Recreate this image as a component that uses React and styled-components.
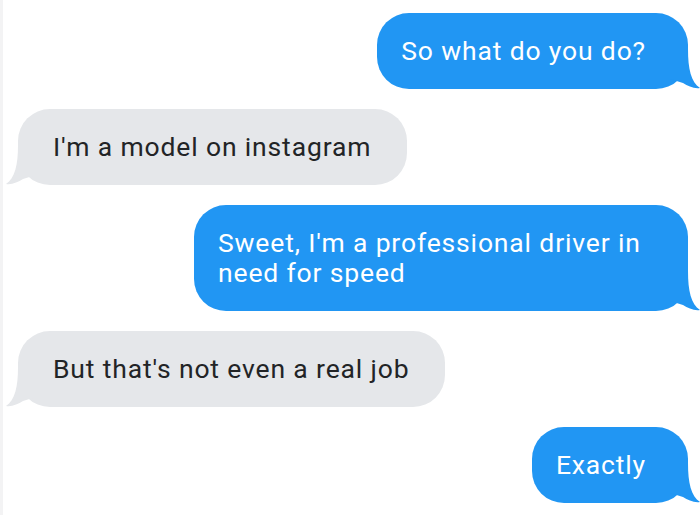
import React from 'react';
import styled, { createGlobalStyle } from 'styled-components';

const GlobalStyle = createGlobalStyle`
	html, body {
		margin: 0;
		padding: 0;
		background: #ffffff;
	}
	body {
		font-family: Roboto, 'Noto Sans', 'Liberation Sans', sans-serif;
	}
`;

const Screen = styled.div`
	width: 700px;
	height: 515px;
	box-sizing: border-box;
	border-left: 3px solid #f3f3f4;
	padding-top: 13px;
	display: flex;
	flex-direction: column;
	gap: 20px;
	overflow: hidden;
`;

const Row = styled.div`
	display: flex;
	justify-content: ${(p) => (p.$mine ? 'flex-end' : 'flex-start')};
	padding: ${(p) => (p.$mine ? '0 12px 0 0' : '0 0 0 15px')};
`;

const Bubble = styled.div`
	position: relative;
	max-width: 428px;
	padding: ${(p) => (p.$mine ? '23px 42px 23px 24px' : '23px 36px 23px 35px')};
	border-radius: 32px;
	background: ${(p) => (p.$mine ? '#2196f3' : '#e5e7ea')};
	color: ${(p) => (p.$mine ? '#ffffff' : '#222426')};
	font-size: 26.5px;
	letter-spacing: 0.85px;
	line-height: 30px;
`;

const TailSvg = styled.svg`
	position: absolute;
	bottom: 0;
	width: 30px;
	height: 40px;
	${(p) => (p.$mine ? 'right: -12px;' : 'left: -12px; transform: scaleX(-1);')}
`;

function Tail({ mine }) {
	return (
		<TailSvg $mine={mine} viewBox="0 0 30 40">
			<path
				d="M18 0 C18 20, 21 33, 30 39 C24 40, 18 37, 13 34 L0 30 L0 0 Z"
				fill={mine ? '#2196f3' : '#e5e7ea'}
			/>
		</TailSvg>
	);
}

const messages = [
	{ mine: true, text: 'So what do you do?' },
	{ mine: false, text: "I'm a model on instagram" },
	{ mine: true, text: "Sweet, I'm a professional driver in need for speed" },
	{ mine: false, text: "But that's not even a real job" },
	{ mine: true, text: 'Exactly' },
];

export default function App() {
	return (
		<Screen>
			<GlobalStyle />
			{messages.map((m, i) => (
				<Row key={i} $mine={m.mine}>
					<Bubble $mine={m.mine}>
						{m.text}
						<Tail mine={m.mine} />
					</Bubble>
				</Row>
			))}
		</Screen>
	);
}
